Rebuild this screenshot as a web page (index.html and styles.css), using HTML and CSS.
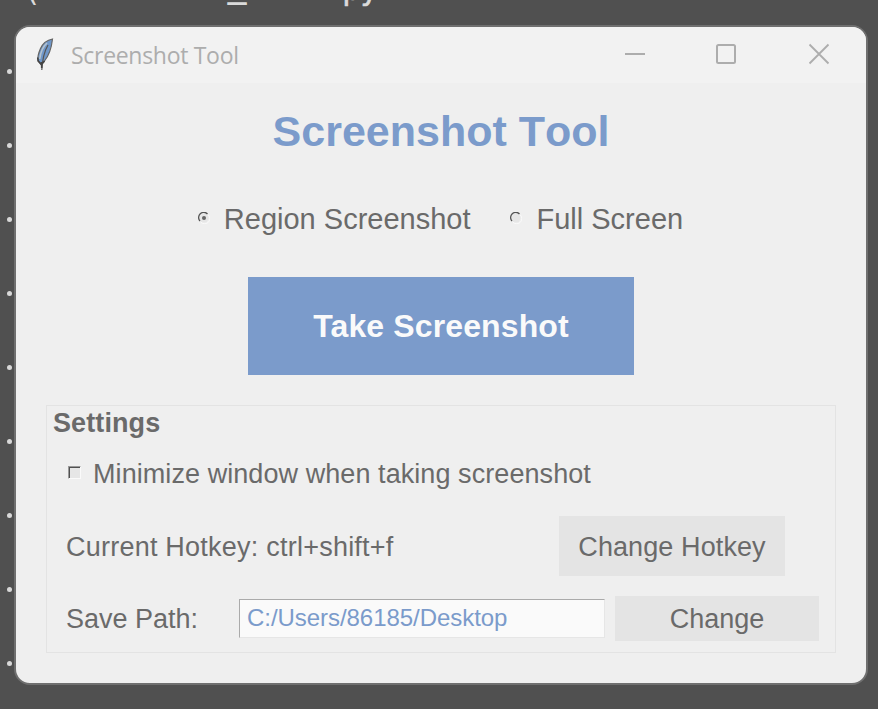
FILE: index.html
```
<!DOCTYPE html>
<html lang="en">
<head>
<meta charset="utf-8">
<title>Screenshot Tool</title>
<link rel="stylesheet" href="styles.css">
</head>
<body>
<div class="backdrop-text"><span class="paren">(</span><span class="underscore">_</span><span class="ext">py</span></div>
<div class="gutter"><i></i><i></i><i></i><i></i><i></i><i></i><i></i><i></i><i></i></div>
<div class="window">
  <header class="titlebar">
    <svg class="feather" width="18" height="34" viewBox="0 0 18 34">
      <path d="M16.500 2C11 3 6.500 7 4.500 11.500C2.500 16 1.200 20 2 24L5 27.500L8.500 24C12.500 19 15.500 11 16.500 2Z" fill="#6f97c9" stroke="#666" stroke-width="1.200"/>
      <path d="M11 6C7 9.500 4.500 16 3.700 22" fill="none" stroke="#b5c3cf" stroke-width="1.600"/>
      <path d="M12 8C8.500 14 6.500 20 5.800 33" fill="none" stroke="#555" stroke-width="1.200"/>
      <path d="M1.700 20.500L2.200 24L5.500 27.500L8.500 24M5.700 25V31" fill="none" stroke="#444" stroke-width="1.600"/>
    </svg>
    <span class="caption">Screenshot Tool</span>
    <svg class="controls" width="206" height="22" viewBox="0 0 206 22" fill="none" stroke="#adadad" stroke-width="2">
      <path d="M0 11H20"/>
      <rect x="92" y="2" width="18" height="18" rx="1.500"/>
      <path d="M184.500 1.500L203.500 20.500M203.500 1.500L184.500 20.500" stroke-width="1.800"/>
    </svg>
  </header>
  <main>
    <h1>Screenshot Tool</h1>
    <div class="modes">
      <label><svg width="12" height="12" viewBox="0 0 12 12" fill="none"><circle cx="6" cy="6" r="4.500" fill="#e6e6e6"/><path d="M2 9A5 5 0 0 1 9.500 2" stroke="#555" stroke-width="1.300"/><path d="M10.300 3A5 5 0 0 1 3 10.300" stroke="#fafafa"/><circle cx="6" cy="6" r="2" fill="#666"/></svg><span>Region Screenshot</span></label>
      <label><svg width="12" height="12" viewBox="0 0 12 12" fill="none"><circle cx="6" cy="6" r="4.500" fill="#e6e6e6"/><path d="M2 9A5 5 0 0 1 9.500 2" stroke="#555" stroke-width="1.300"/><path d="M10.300 3A5 5 0 0 1 3 10.300" stroke="#fafafa"/></svg><span>Full Screen</span></label>
    </div>
    <button class="capture">Take Screenshot</button>
    <section class="settings">
      <h2>Settings</h2>
      <label class="minimize"><i class="checkbox"></i><span>Minimize window when taking screenshot</span></label>
      <div class="hotkey"><span>Current Hotkey: ctrl+shift+f</span><button>Change Hotkey</button></div>
      <div class="save"><span>Save Path:</span><div class="entry">C:/Users/86185/Desktop</div><button>Change</button></div>
    </section>
  </main>
</div>
</body>
</html>
```
FILE: styles.css
```
* { box-sizing: border-box; }
body {
  margin: 0;
  width: 878px;
  height: 709px;
  overflow: hidden;
  background: #505050;
  color: #6a6a6a;
  font-family: "Liberation Sans", Arial, sans-serif;
  font-kerning: none;
  display: grid;
  grid-template: 25px 660px / 14px 854px;
}
.backdrop-text {
  grid-column: 1 / 3;
  height: 25px;
  overflow: hidden;
  display: flex;
  color: #dadada;
  font: 30px/30px "DejaVu Sans Mono", monospace;
}
.backdrop-text span { margin-top: -24px; }
.paren { margin-left: 23px; }
.backdrop-text .underscore { margin-left: 187px; margin-top: -28px; -webkit-text-stroke: 1.5px #dadada; }
.backdrop-text .ext { margin-left: 96px; margin-top: -25px; -webkit-text-stroke: .6px #dadada; }
.gutter {
  display: flex;
  flex-direction: column;
  gap: 69px;
  padding: 44px 0 0 7px;
}
.gutter i { flex: none; width: 5px; height: 5px; border-radius: 50%; background: #d8d8d8; }
.window {
  border: 2px solid #6f6f6f;
  border-radius: 16px;
  overflow: hidden;
  background: #efefef;
}
.titlebar {
  height: 56px;
  background: #f2f2f2;
  display: flex;
  align-items: center;
  padding: 0 35px 0 20px;
}
.feather { margin-top: -3px; }
.caption {
  margin: 0 0 0 17px;
  color: #adadad;
  font: 23px/32px "Open Sans", "Noto Sans", sans-serif;
  letter-spacing: -.3px;
}
.controls { margin-left: auto; margin-top: -2px; }
main { display: flex; flex-direction: column; align-items: center; }
h1 {
  margin: 23px 0 0;
  color: #7b9bcb;
  font-size: 43px;
  line-height: 50px;
}
.modes { display: flex; gap: 40px; margin: 46px 1px 0 0; font-size: 29px; line-height: 34px; }
.modes label { display: flex; gap: 14px; }
.modes svg { margin-top: 10px; }
button {
  border: 0;
  padding: 0;
  font: 27px/30px "Liberation Sans", Arial, sans-serif;
  color: #6a6a6a;
  background: #e4e4e4;
}
.capture {
  width: 386px;
  height: 98px;
  margin-top: 41px;
  background: #7b9bcb;
  color: #fafafa;
  font-size: 32px;
  font-weight: bold;
  letter-spacing: .12px;
}
.settings {
  width: 790px;
  height: 248px;
  margin-top: 30px;
  border: 1px solid #e3e3e3;
  font-size: 27px;
  line-height: 30px;
  padding: 2px 16px 0 19px;
}
h2 { margin: 0 0 0 -13px; font-size: 27px; line-height: 30px; letter-spacing: .1px; }
.minimize { display: flex; margin: 21px 0 0 2px; gap: 12px; letter-spacing: .07px; }
.checkbox {
  width: 13px;
  height: 13px;
  margin-top: 7px;
  background: #e6e6e6;
  border: 1px solid;
  border-color: #999 #fafafa #fafafa #999;
  box-shadow: inset 1px 1px #505050;
}
.hotkey { display: flex; align-items: center; justify-content: space-between; margin: 27px 34px 0 0; }
.hotkey span { padding-top: 2px; letter-spacing: .23px; }
.hotkey button { width: 226px; height: 60px; padding-top: 2px; letter-spacing: .1px; }
.save { display: flex; align-items: center; margin-top: 20px; }
.save > span { width: 173px; }
.entry {
  width: 366px;
  height: 39px;
  border: 1px solid;
  border-color: #aaa #e6e6e6 #e6e6e6 #aaa;
  background: #fafafa;
  color: #7b9bcb;
  padding-left: 7px;
  font-size: 24px;
  line-height: 36px;
  letter-spacing: -.05px;
}
.save button { width: 204px; height: 45px; margin-left: 10px; }
```
